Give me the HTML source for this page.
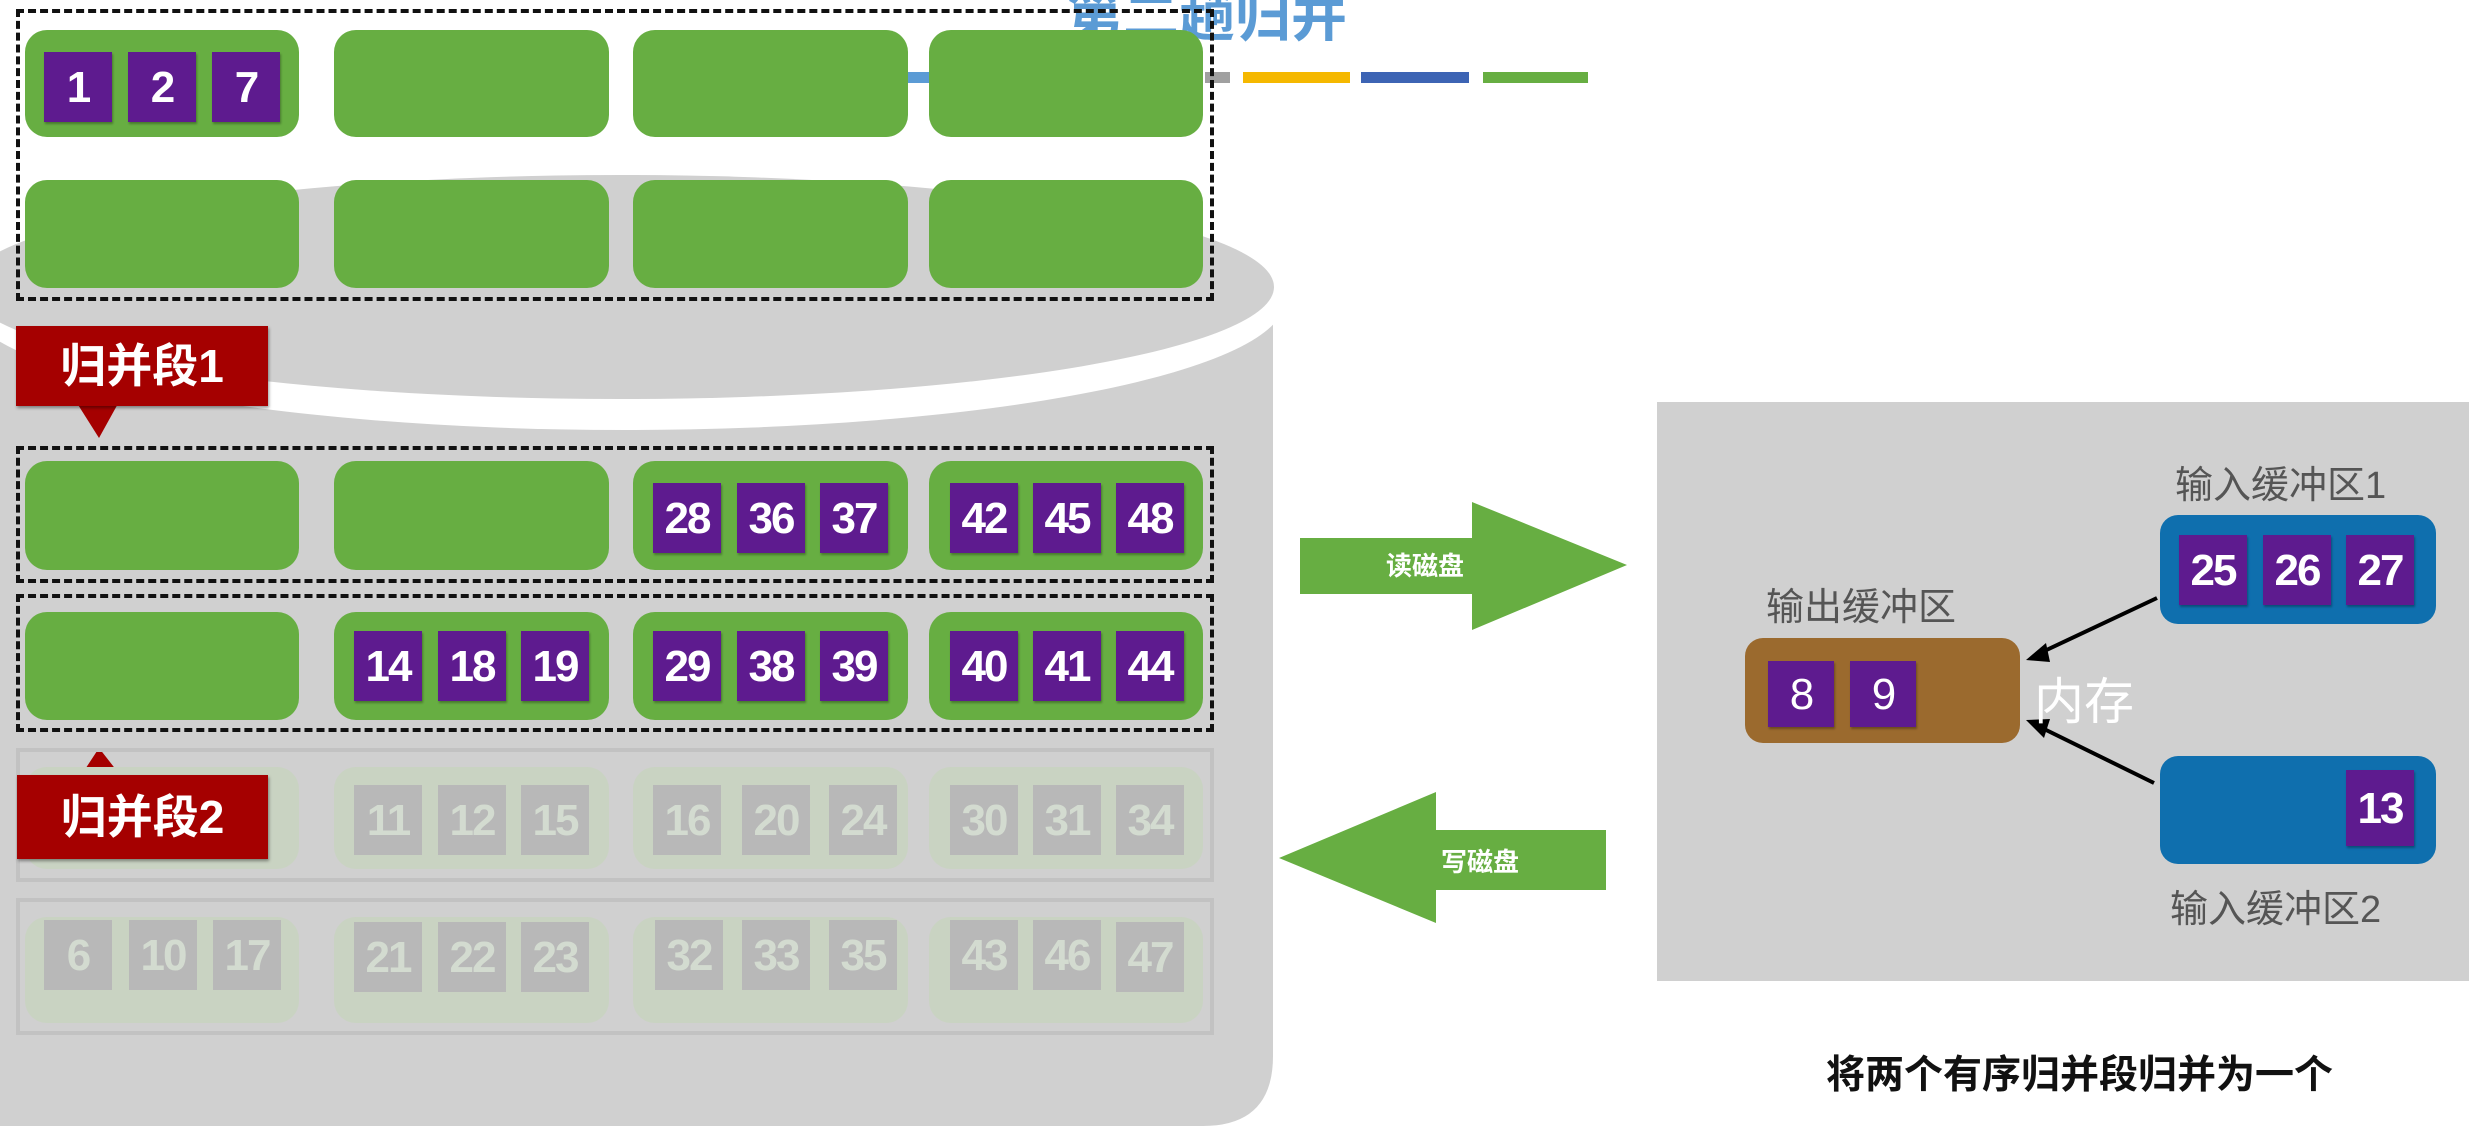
<!DOCTYPE html>
<html><head><meta charset="utf-8"><style>
html,body{margin:0;padding:0;width:2469px;height:1126px;overflow:hidden;background:#fff;font-family:"Liberation Sans","Noto Sans CJK SC",sans-serif}
.a{position:absolute}
.g{position:absolute;background:#67ae42;border-radius:22px}
.fg{position:absolute;background:#c9d3c2;border-radius:22px}
.p{position:absolute;width:68px;height:70px;background:#5e1b8f;color:#fff;font-size:44px;font-weight:bold;text-align:center;line-height:72px;letter-spacing:-2px;box-shadow:1px 2px 2px rgba(0,0,0,.3)}
.fp{position:absolute;width:68px;height:70px;background:#b8b8b8;color:#d3dbd0;font-size:44px;font-weight:bold;text-align:center;line-height:72px;letter-spacing:-2px}
.box{position:absolute;border:4px dashed #111;box-sizing:border-box}
.fbox{position:absolute;border:4px solid #c2c2c2;box-sizing:border-box}
.lab{position:absolute;background:#a50000;color:#fff;font-size:46px;font-weight:bold;text-align:center;box-shadow:1px 2px 3px rgba(0,0,0,.4)}
.t{position:absolute;color:#555;font-size:38px;white-space:nowrap}
</style></head><body>
<svg class="a" style="left:0;top:0" width="2469" height="1126">
<path d="M0 290 L1273 290 L1273 1056 Q1273 1126 1203 1126 L0 1126 Z" fill="#d0d0d0"/>
<ellipse cx="625" cy="300" rx="660" ry="130" fill="#fff"/>
<ellipse cx="620" cy="287" rx="654" ry="112" fill="#d0d0d0"/>
<rect x="1205" y="72" width="25" height="11" fill="#a0a0a0"/>
<rect x="905" y="72" width="25" height="11" fill="#5b9bd5"/>
<rect x="1243" y="72" width="107" height="11" fill="#f5b800"/>
<rect x="1361" y="72" width="108" height="11" fill="#3d64b4"/>
<rect x="1483" y="72" width="105" height="11" fill="#67ae42"/>
<rect x="1657" y="402" width="812" height="579" fill="#d0d0d0"/>
<polygon points="1300,538 1472,538 1472,502 1627,565 1472,630 1472,594 1300,594" fill="#67ae42"/>
<polygon points="1279,858 1436,792 1436,830 1606,830 1606,890 1436,890 1436,923" fill="#67ae42"/>
<line x1="2157" y1="598" x2="2038" y2="654" stroke="#000" stroke-width="4"/>
<polygon points="2026,660 2046,643 2050,662" fill="#000"/>
<line x1="2154" y1="783" x2="2038" y2="726" stroke="#000" stroke-width="4"/>
<polygon points="2026,720 2050,719 2044,738" fill="#000"/>
<polygon points="75,400 120,400 99,438" fill="#a50000"/>
<polygon points="78,780 124,780 99,748" fill="#a50000"/>
</svg>
<div class="a" style="left:1067px;top:-28px;font-size:56px;font-weight:bold;color:#5b9bd5;white-space:nowrap">第二趟归并</div>

<div class="box" style="left:16px;top:9px;width:1198px;height:292px"></div>
<div class="g" style="left:25px;top:30px;width:274px;height:107px"></div>
<div class="g" style="left:334px;top:30px;width:275px;height:107px"></div>
<div class="g" style="left:633px;top:30px;width:275px;height:107px"></div>
<div class="g" style="left:929px;top:30px;width:274px;height:107px"></div>
<div class="g" style="left:25px;top:180px;width:274px;height:108px"></div>
<div class="g" style="left:334px;top:180px;width:275px;height:108px"></div>
<div class="g" style="left:633px;top:180px;width:275px;height:108px"></div>
<div class="g" style="left:929px;top:180px;width:274px;height:108px"></div>
<div class="p" style="left:44px;top:52px">1</div>
<div class="p" style="left:128px;top:52px">2</div>
<div class="p" style="left:212px;top:52px">7</div>

<div class="lab" style="left:16px;top:326px;width:252px;height:80px;line-height:80px">归并段1</div>

<div class="box" style="left:16px;top:446px;width:1198px;height:137px"></div>
<div class="g" style="left:25px;top:461px;width:274px;height:109px"></div>
<div class="g" style="left:334px;top:461px;width:275px;height:109px"></div>
<div class="g" style="left:633px;top:461px;width:275px;height:109px"></div>
<div class="g" style="left:929px;top:461px;width:274px;height:109px"></div>
<div class="p" style="left:653px;top:483px">28</div>
<div class="p" style="left:737px;top:483px">36</div>
<div class="p" style="left:820px;top:483px">37</div>
<div class="p" style="left:950px;top:483px">42</div>
<div class="p" style="left:1033px;top:483px">45</div>
<div class="p" style="left:1116px;top:483px">48</div>

<div class="box" style="left:16px;top:594px;width:1198px;height:138px"></div>
<div class="g" style="left:25px;top:612px;width:274px;height:108px"></div>
<div class="g" style="left:334px;top:612px;width:275px;height:108px"></div>
<div class="g" style="left:633px;top:612px;width:275px;height:108px"></div>
<div class="g" style="left:929px;top:612px;width:274px;height:108px"></div>
<div class="p" style="left:354px;top:631px">14</div>
<div class="p" style="left:438px;top:631px">18</div>
<div class="p" style="left:521px;top:631px">19</div>
<div class="p" style="left:653px;top:631px">29</div>
<div class="p" style="left:737px;top:631px">38</div>
<div class="p" style="left:820px;top:631px">39</div>
<div class="p" style="left:950px;top:631px">40</div>
<div class="p" style="left:1033px;top:631px">41</div>
<div class="p" style="left:1116px;top:631px">44</div>

<div class="fbox" style="left:16px;top:748px;width:1198px;height:134px"></div>
<div class="fg" style="left:25px;top:767px;width:274px;height:102px"></div>
<div class="fg" style="left:334px;top:767px;width:275px;height:102px"></div>
<div class="fg" style="left:633px;top:767px;width:275px;height:102px"></div>
<div class="fg" style="left:929px;top:767px;width:274px;height:102px"></div>
<div class="fp" style="left:354px;top:785px">11</div>
<div class="fp" style="left:438px;top:785px">12</div>
<div class="fp" style="left:521px;top:785px">15</div>
<div class="fp" style="left:653px;top:785px">16</div>
<div class="fp" style="left:742px;top:785px">20</div>
<div class="fp" style="left:829px;top:785px">24</div>
<div class="fp" style="left:950px;top:785px">30</div>
<div class="fp" style="left:1033px;top:785px">31</div>
<div class="fp" style="left:1116px;top:785px">34</div>
<div class="lab" style="left:17px;top:775px;width:251px;height:84px;line-height:84px">归并段2</div>

<div class="fbox" style="left:16px;top:898px;width:1198px;height:137px"></div>
<div class="fg" style="left:25px;top:917px;width:274px;height:106px"></div>
<div class="fg" style="left:334px;top:917px;width:275px;height:106px"></div>
<div class="fg" style="left:633px;top:917px;width:275px;height:106px"></div>
<div class="fg" style="left:929px;top:917px;width:274px;height:106px"></div>
<div class="fp" style="left:44px;top:920px">6</div>
<div class="fp" style="left:129px;top:920px">10</div>
<div class="fp" style="left:213px;top:920px">17</div>
<div class="fp" style="left:354px;top:922px">21</div>
<div class="fp" style="left:438px;top:922px">22</div>
<div class="fp" style="left:521px;top:922px">23</div>
<div class="fp" style="left:655px;top:920px">32</div>
<div class="fp" style="left:742px;top:920px">33</div>
<div class="fp" style="left:829px;top:920px">35</div>
<div class="fp" style="left:950px;top:920px">43</div>
<div class="fp" style="left:1033px;top:920px">46</div>
<div class="fp" style="left:1116px;top:922px">47</div>

<div class="a" style="left:1365px;top:546px;width:120px;text-align:center;color:#fff;font-size:26px;font-weight:bold">读磁盘</div>
<div class="a" style="left:1420px;top:842px;width:120px;text-align:center;color:#fff;font-size:26px;font-weight:bold">写磁盘</div>

<div class="t" style="left:1766px;top:576px">输出缓冲区</div>
<div class="a" style="left:1745px;top:638px;width:275px;height:105px;background:#9b6a2e;border-radius:18px"></div>
<div class="p" style="left:1768px;top:661px;width:66px;height:66px;line-height:68px;font-weight:normal">8</div>
<div class="p" style="left:1850px;top:661px;width:66px;height:66px;line-height:68px;font-weight:normal">9</div>
<div class="a" style="left:2034px;top:662px;color:#fff;font-size:50px">内存</div>

<div class="t" style="left:2175px;top:454px">输入缓冲区1</div>
<div class="a" style="left:2160px;top:515px;width:276px;height:109px;background:#0f6fae;border-radius:18px"></div>
<div class="p" style="left:2179px;top:535px;height:70px">25</div>
<div class="p" style="left:2263px;top:535px;height:70px">26</div>
<div class="p" style="left:2346px;top:535px;height:70px">27</div>
<div class="a" style="left:2160px;top:756px;width:276px;height:108px;background:#0f6fae;border-radius:18px"></div>
<div class="p" style="left:2346px;top:770px;height:76px;line-height:78px">13</div>
<div class="t" style="left:2170px;top:878px">输入缓冲区2</div>

<div class="a" style="left:1826px;top:1044px;font-size:39px;font-weight:bold;color:#111;white-space:nowrap">将两个有序归并段归并为一个</div>
</body></html>
